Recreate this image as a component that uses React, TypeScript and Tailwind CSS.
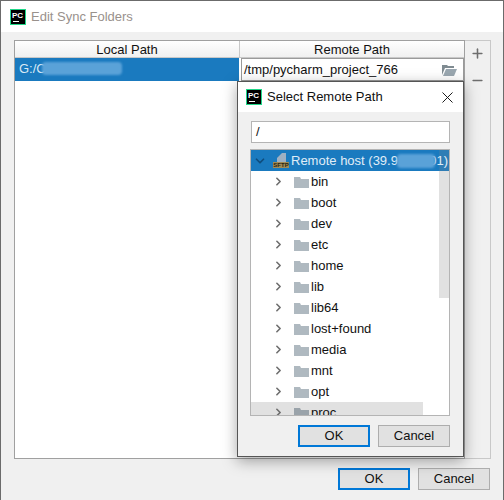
import { ChevronDown, ChevronRight, Minus, Plus, X } from "lucide-react";

const folders = ["bin", "boot", "dev", "etc", "home", "lib", "lib64", "lost+found", "media", "mnt", "opt"];

function PcLogo() {
  return (
    <div className="relative h-[16px] w-[16px] border border-[#21d789] bg-black">
      <span className="absolute left-[1px] top-[1px] text-[8px] font-bold leading-[9px] text-white">PC</span>
      <div className="absolute bottom-[2px] left-[2px] h-px w-[6px] bg-white" />
    </div>
  );
}

function FolderIcon({ color = "#afb9c0" }: { color?: string }) {
  return (
    <svg width="15" height="12" viewBox="0 0 15 12" className="shrink-0">
      <path d="M0 1h6l1 2h8v9H0z" fill={color} />
    </svg>
  );
}

function SftpIcon() {
  return (
    <div className="relative h-[15px] w-[16px] shrink-0">
      <svg width="16" height="9" viewBox="0 0 16 9" className="absolute left-0 top-0">
        <path d="M9 0h4v9H4V5z" fill="#9fb0c2" />
      </svg>
      <div className="absolute bottom-0 left-0 h-[6px] w-[16px] bg-[#a08c58] text-center text-[6px] font-bold leading-[6px] text-[#2b2412]">SFTP</div>
    </div>
  );
}

function Btn({ label, primary }: { label: string; primary?: boolean }) {
  return (
    <div
      className={`flex h-[22px] w-[72px] items-center justify-center bg-[#e1e1e1] text-[13px] text-[#111] ${
        primary ? "border-2 border-[#0078d7]" : "border border-[#adadad]"
      }`}
    >
      {label}
    </div>
  );
}

function Blur({ className }: { className: string }) {
  return <div className={`absolute rounded-sm bg-[#5aa2d8] blur-[1px] ${className}`} />;
}

export default function App() {
  return (
    <div className="relative h-[500px] w-[504px] overflow-hidden bg-[#6b6b6b] pl-[1px] pt-[1px] pr-[1px] font-['Liberation_Sans',sans-serif]">
      <div className="flex h-[499px] flex-col bg-[#f0f0f0]">
        <div className="flex h-[31px] items-center gap-[5px] bg-white pl-[9px] text-[13px] text-[#99918c]">
          <PcLogo />
          Edit Sync Folders
        </div>

        <div className="flex h-[428px] pl-[13px] pr-[12px] pt-[8px]">
          <div className="flex h-[419px] w-[451px] flex-col border border-[#a0a0a0] bg-white">
            <div className="flex h-[17px] text-[13px] leading-[17px] text-[#111]">
              <div className="w-[225px] border-b border-r border-[#c8c8c8] bg-gradient-to-b from-white to-[#f0f0f0] text-center">Local Path</div>
              <div className="flex-1 border-b border-[#c8c8c8] bg-gradient-to-b from-white to-[#f0f0f0] text-center">Remote Path</div>
            </div>
            <div className="flex h-[23px] text-[13px]">
              <div className="relative w-[224px] bg-[#1a7abf] pl-[4px] leading-[22px] text-[#d9e9f5]">
                G:/C
                <Blur className="left-[27px] top-[4px] h-[13px] w-[80px]" />
              </div>
              <div className="ml-[2px] flex flex-1 items-center justify-between border border-[#9a9a9a] bg-white pl-[2px] pr-[6px] text-[#111]">
                /tmp/pycharm_project_766
                <svg width="15" height="12" viewBox="0 0 15 12">
                  <path d="M0 1h5l1 1h6v2H3L0 11z" fill="#7f8b91" />
                  <path d="M4 5h11l-3 7H1z" fill="#9aa7b0" />
                </svg>
              </div>
            </div>
          </div>
          <div className="flex h-[419px] w-[26px] flex-col items-center gap-[12px] border border-l-0 border-[#c8c8c8] pt-[5px] text-[#6e6e6e]">
            <Plus size={15} strokeWidth={2.5} />
            <Minus size={15} strokeWidth={2.5} />
          </div>
        </div>

        <div className="flex justify-end gap-[8px] pr-[13px] pt-[8px]">
          <Btn label="OK" primary />
          <Btn label="Cancel" />
        </div>
      </div>

      <div className="absolute left-[237px] top-[81px] flex h-[376px] w-[227px] flex-col border border-[#555] bg-[#f0f0f0] shadow-[0_4px_14px_rgba(0,0,0,0.35)]">
        <div className="flex h-[30px] items-center gap-[5px] bg-white pl-[8px] pr-[6px] text-[13px] text-[#111]">
          <PcLogo />
          <span className="flex-1">Select Remote Path</span>
          <X size={19} strokeWidth={1.2} />
        </div>
        <div className="pl-[13px] pr-[13px] pt-[9px]">
          <div className="flex h-[22px] items-center border border-[#b4b4b4] bg-white pl-[4px] text-[13px] text-[#111]">/</div>
        </div>
        <div className="ml-[12px] mr-[13px] mt-[6px] flex h-[267px] flex-col overflow-hidden border border-[#b4b4b4] bg-white text-[13px] text-[#111]">
          <div className="relative flex h-[21px] shrink-0 items-center bg-[#1a7abf] pl-[2px] pr-[1px] text-[#e0edf7]">
            <div className="absolute bottom-0 right-0 top-0 w-[10px] bg-[#2f7db5]" />
            <ChevronDown size={14} strokeWidth={3} className="shrink-0 text-[#0f4d7d]" />
            <div className="ml-[6px] mr-[2px]"><SftpIcon /></div>
            <span className="relative flex-1 whitespace-nowrap">Remote host (39.9</span>
            <span className="relative">01)</span>
            <Blur className="left-[146px] top-[4px] h-[14px] w-[38px]" />
          </div>
          <div className="flex min-h-0 flex-1">
            <div className="w-[172px] shrink-0">
              {folders.map((name) => (
                <div key={name} className="flex h-[21px] items-center pl-[21px]">
                  <ChevronRight size={13} strokeWidth={3} className="shrink-0 text-[#6e6e6e]" />
                  <div className="ml-[9px] mr-[2px]"><FolderIcon /></div>
                  {name}
                </div>
              ))}
              <div className="flex h-[21px] items-center bg-[#e1e1e1] pl-[21px]">
                <ChevronRight size={13} strokeWidth={3} className="shrink-0 text-[#6e6e6e]" />
                <div className="ml-[9px] mr-[2px]"><FolderIcon color="#9aa3aa" /></div>
                proc
              </div>
            </div>
            <div className="ml-auto h-[127px] w-[10px] bg-[#e1e1e1]" />
          </div>
        </div>
        <div className="flex justify-end gap-[8px] pr-[13px] pt-[9px]">
          <Btn label="OK" primary />
          <Btn label="Cancel" />
        </div>
      </div>
    </div>
  );
}
